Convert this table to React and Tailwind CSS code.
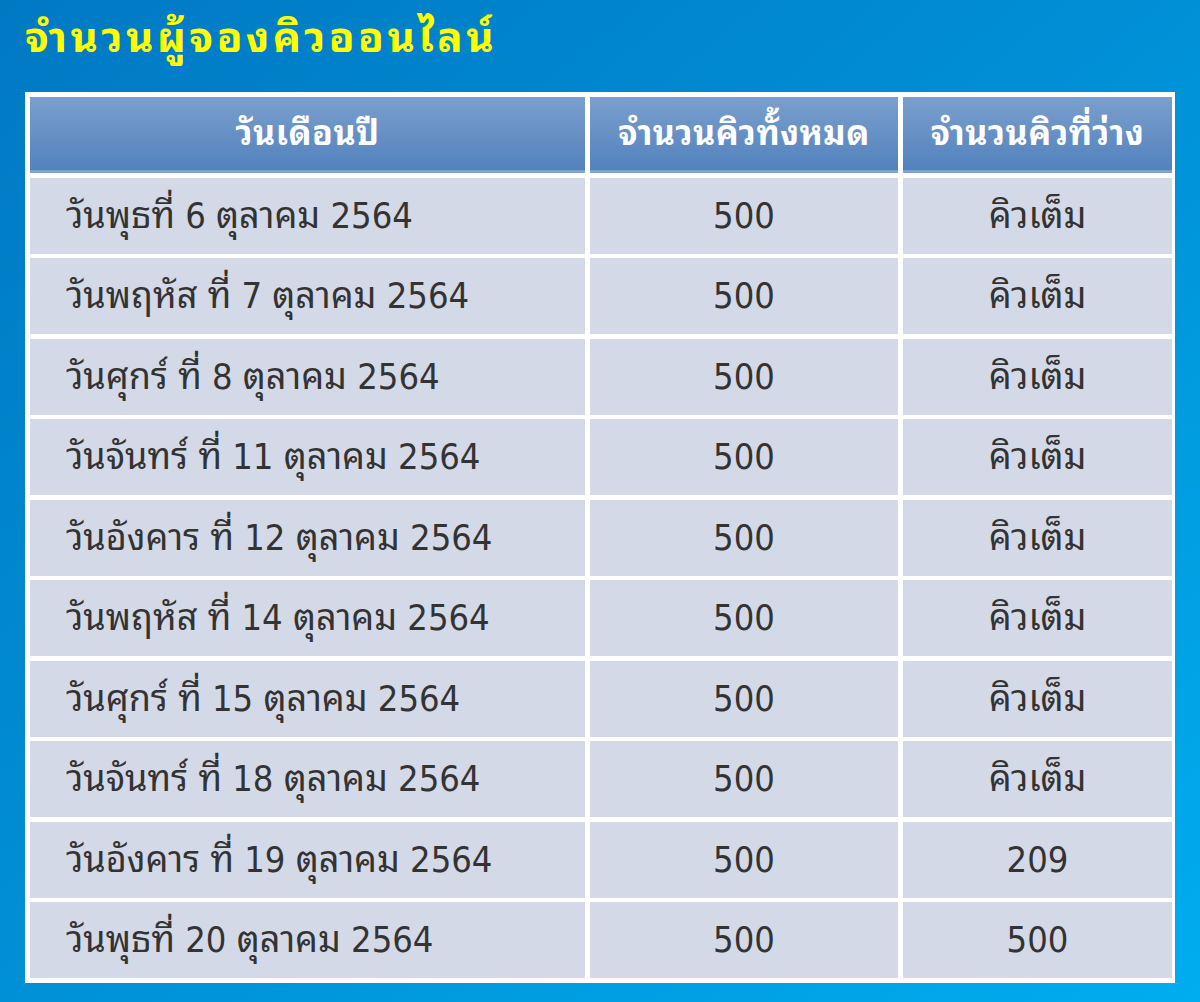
const rows = [
  ['วันพุธที่ 6 ตุลาคม 2564', '500', 'คิวเต็ม'],
  ['วันพฤหัส ที่ 7 ตุลาคม 2564', '500', 'คิวเต็ม'],
  ['วันศุกร์ ที่ 8 ตุลาคม 2564', '500', 'คิวเต็ม'],
  ['วันจันทร์ ที่ 11 ตุลาคม 2564', '500', 'คิวเต็ม'],
  ['วันอังคาร ที่ 12 ตุลาคม 2564', '500', 'คิวเต็ม'],
  ['วันพฤหัส ที่ 14 ตุลาคม 2564', '500', 'คิวเต็ม'],
  ['วันศุกร์ ที่ 15 ตุลาคม 2564', '500', 'คิวเต็ม'],
  ['วันจันทร์ ที่ 18 ตุลาคม 2564', '500', 'คิวเต็ม'],
  ['วันอังคาร ที่ 19 ตุลาคม 2564', '500', '209'],
  ['วันพุธที่ 20 ตุลาคม 2564', '500', '500'],
];

const headCell =
  'flex h-[76px] items-center justify-center bg-gradient-to-b from-[#7b9fcd] to-[#5282bd] border-b-[3px] border-[#7fa1cf] text-[34px] font-bold tracking-[0.5px] text-white';
const bodyCell = 'flex h-[76px] items-center bg-[#d3d9e7] text-[36px] text-[#333333]';

export default function App() {
  return (
    <div
      className="min-h-[1002px] w-full bg-gradient-to-br from-[#0079c3] via-[#0090d6] to-[#00adef] px-[25px] pt-[14px]"
      style={{ fontFamily: '"DejaVu Sans Condensed", "DejaVu Sans", "Noto Sans Thai Looped", sans-serif' }}
    >
      <h1 className="h-[78px] text-[42px] font-bold leading-[48px] tracking-[3.5px] text-[#ffff00]">
        จำนวนผู้จองคิวออนไลน์
      </h1>
      <div className="grid grid-cols-[555px_308px_269px] gap-x-[5px] gap-y-[4.5px] bg-white p-[5px] pb-[4.5px]">
        <div className={headCell}>วันเดือนปี</div>
        <div className={headCell}>จำนวนคิวทั้งหมด</div>
        <div className={headCell}>จำนวนคิวที่ว่าง</div>
        {rows.map(([date, total, free]) => (
          <>
            <div key={date} className={`${bodyCell} pl-[36px]`}>{date}</div>
            <div className={`${bodyCell} justify-center`}>{total}</div>
            <div className={`${bodyCell} justify-center`}>{free}</div>
          </>
        ))}
      </div>
    </div>
  );
}
